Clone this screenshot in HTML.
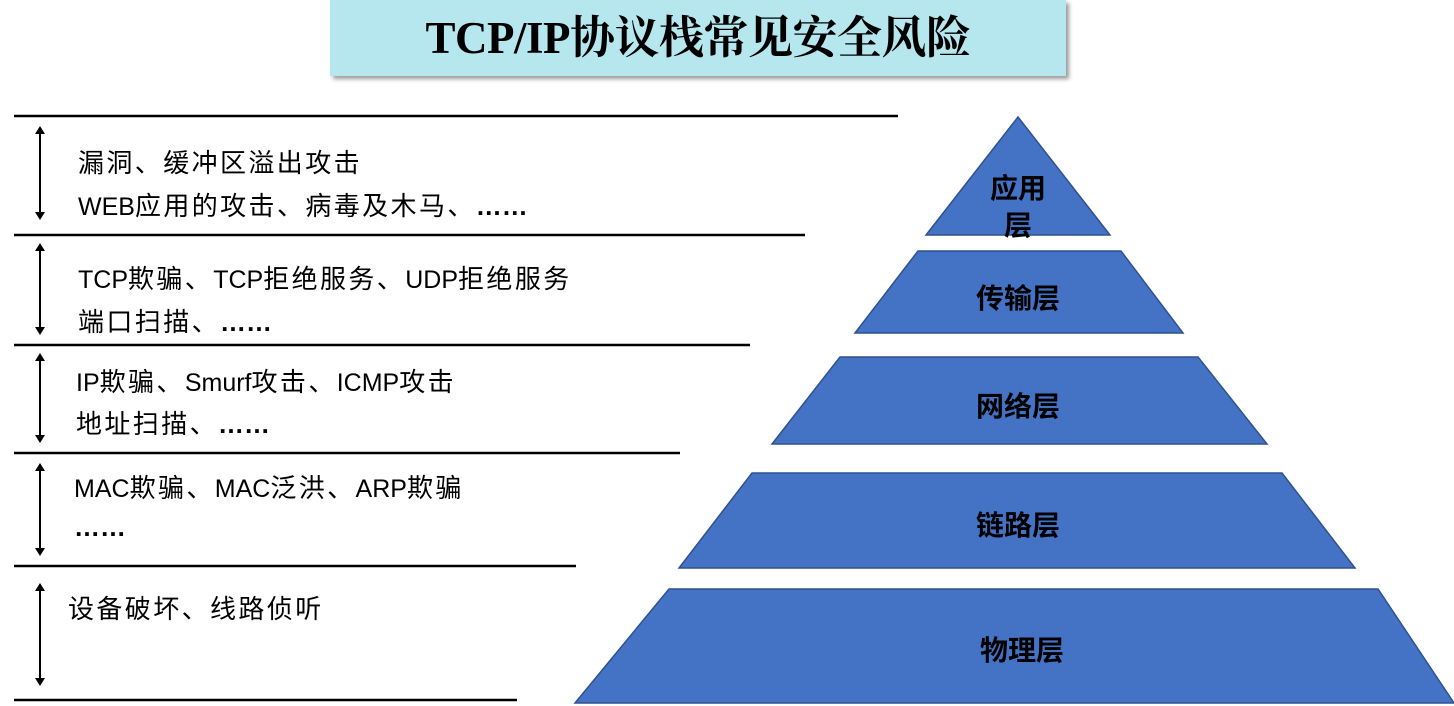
<!DOCTYPE html>
<html><head><meta charset="utf-8"><style>
html,body{margin:0;padding:0;background:#fff;}
body{width:1454px;height:706px;overflow:hidden;position:relative;}
.title{position:absolute;left:330px;top:0;width:736px;height:76px;background:#B7E7EE;box-shadow:3px 3px 4px #9a9a9a;text-align:center;line-height:76px;font-family:"Liberation Serif","Noto Serif CJK SC",serif;font-weight:bold;font-size:45px;color:#000;letter-spacing:-0.5px;}
.t{position:absolute;font-family:"Liberation Sans","Noto Sans CJK SC",sans-serif;font-size:26px;letter-spacing:2.4px;color:#000;white-space:nowrap;line-height:30px;}
.t b{font-weight:normal;letter-spacing:0;font-size:25px;}
.t i{font-style:normal;font-weight:bold;letter-spacing:0;}
.p{position:absolute;font-family:"Liberation Sans","Noto Sans CJK SC",sans-serif;font-size:28px;font-weight:bold;color:#000;text-align:center;width:200px;line-height:37px;}
</style></head><body>
<svg width="1454" height="706" style="position:absolute;left:0;top:0">
<defs><marker id="a" markerWidth="8" markerHeight="10" refX="4" refY="5" orient="auto-start-reverse" markerUnits="userSpaceOnUse"><path d="M0,0 L8,5 L0,10 z" fill="#000"/></marker></defs>
<g stroke="#000" stroke-width="2.5">
<line x1="14" y1="116" x2="898" y2="116"/>
<line x1="14" y1="235" x2="805" y2="235"/>
<line x1="14" y1="345" x2="750" y2="345"/>
<line x1="14" y1="453" x2="680" y2="453"/>
<line x1="14" y1="566" x2="576" y2="566"/>
<line x1="14" y1="700" x2="517" y2="700"/>
</g>
<g stroke="#000" stroke-width="2" marker-start="url(#a)" marker-end="url(#a)">
<line x1="40" y1="130" x2="40" y2="216"/>
<line x1="40" y1="247" x2="40" y2="331"/>
<line x1="40" y1="357" x2="40" y2="439"/>
<line x1="40" y1="467" x2="40" y2="552"/>
<line x1="40" y1="587" x2="40" y2="682"/>
</g>
<g fill="#4472C4" stroke="#2F528F" stroke-width="1.5">
<polygon points="1018,117 1110,235 926,235"/>
<polygon points="918,251 1121,251 1183,333 855,333"/>
<polygon points="840,357 1198,357 1267,444 772,444"/>
<polygon points="752,473 1282,473 1355,568 679,568"/>
<polygon points="669,589 1378,589 1454,703 575,703"/>
</g>
</svg>
<div class="title">TCP/IP协议栈常见安全风险</div>
<div class="t" style="left:78px;top:148px">漏洞、缓冲区溢出攻击</div>
<div class="t" style="left:78px;top:191px"><b>WEB</b>应用的攻击、病毒及木马、<i>……</i></div>
<div class="t" style="left:78px;top:264px"><b>TCP</b>欺骗、<b>TCP</b>拒绝服务、<b>UDP</b>拒绝服务</div>
<div class="t" style="left:78px;top:307px">端口扫描、<i>……</i></div>
<div class="t" style="left:76px;top:367px"><b>IP</b>欺骗、<b>Smurf</b>攻击、<b>ICMP</b>攻击</div>
<div class="t" style="left:76px;top:409px">地址扫描、<i>……</i></div>
<div class="t" style="left:74px;top:473px"><b>MAC</b>欺骗、<b>MAC</b>泛洪、<b>ARP</b>欺骗</div>
<div class="t" style="left:74px;top:512px"><i>……</i></div>
<div class="t" style="left:68px;top:594px">设备破坏、线路侦听</div>
<div class="p" style="left:918px;top:170px">应用<br>层</div>
<div class="p" style="left:918px;top:280px">传输层</div>
<div class="p" style="left:918px;top:388px">网络层</div>
<div class="p" style="left:918px;top:507px">链路层</div>
<div class="p" style="left:922px;top:632px">物理层</div>
</body></html>
